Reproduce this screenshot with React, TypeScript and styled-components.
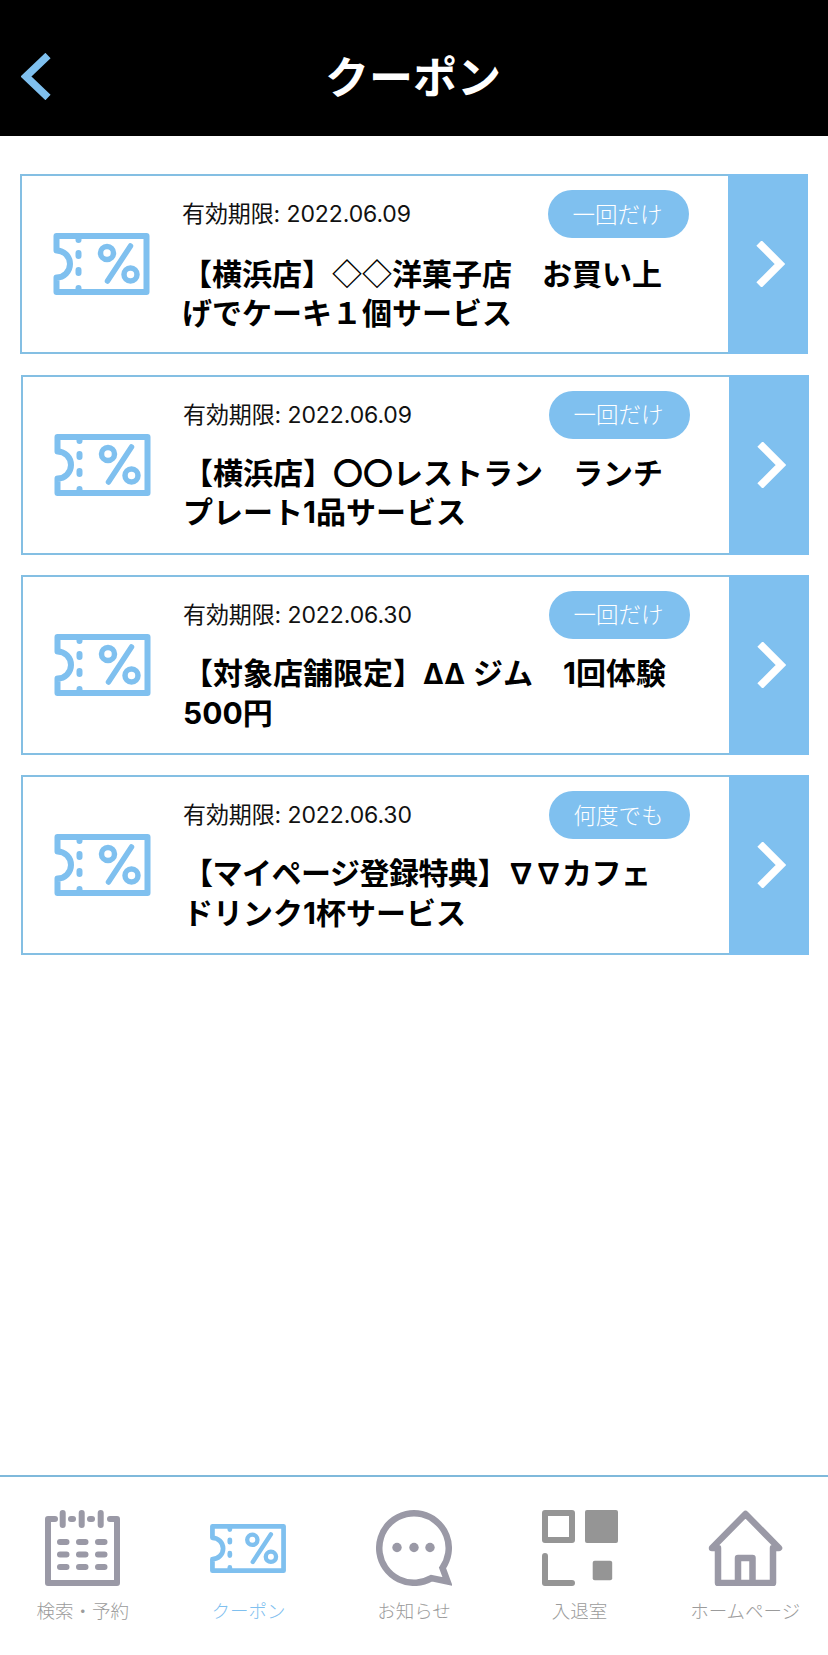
import * as React from 'react'
import styled, { createGlobalStyle } from 'styled-components'

const BLUE = '#7fc0ef'
const LINE = '#84bfe3'
const GREY = '#9a99a6'
const JP = '"Noto Sans CJK JP", sans-serif'

const GlobalStyle = createGlobalStyle`
html, body {
  margin: 0;
  padding: 0;
  background: #fff;
}
* {
  box-sizing: border-box;
}
`

const Page = styled.div`
width: 828px;
height: 1655px;
display: flex;
flex-direction: column;
font-family: ${JP};
background: #fff;
`

const Header = styled.header`
flex: none;
height: 136px;
background: #000;
display: grid;
grid-template-columns: 100px 1fr 100px;
align-items: center;
padding-top: 14px;
`

const BackButton = styled.div`
padding-left: 21px;
padding-top: 2px;
display: flex;
`

const Title = styled.h1`
margin: 0;
text-align: center;
color: #fff;
font-size: 44px;
line-height: 60px;
font-weight: 700;
transform: translateX(-1px);
`

const List = styled.main`
flex: auto;
display: flex;
flex-direction: column;
gap: 20.4px;
padding: 38.2px 19px 0 21px;
`

const Card = styled.section<{ $first?: boolean }>`
height: 180px;
display: flex;
border: 2px solid ${LINE};
background: #fff;
transform: translateX(${(p) => (p.$first ? '-1px' : '0')});
`

const TicketCell = styled.div`
flex: none;
width: 159px;
display: flex;
align-items: center;
padding-left: 31px;
`

const Body = styled.div`
flex: auto;
min-width: 0;
padding: 14px 39px 0 1px;
`

const MetaRow = styled.div`
height: 48px;
display: flex;
align-items: center;
justify-content: space-between;
`

const Expiry = styled.div`
font-family: Inter, ${JP};
font-size: 23px;
letter-spacing: -0.1px;
color: #111;
transform: translateY(-2px);
`

const Pill = styled.div`
width: 141px;
height: 48px;
border-radius: 24px;
background: ${BLUE};
color: #fff;
font-size: 22.5px;
font-weight: 300;
display: flex;
align-items: center;
justify-content: center;
padding: 0 2px 3px 0;
`

const CouponName = styled.div`
margin-top: 15px;
font-family: Inter, ${JP};
font-size: 30px;
line-height: 39px;
font-weight: 700;
color: #000;
`

const NameLine = styled.span<{ $tight?: boolean }>`
letter-spacing: ${(p) => (p.$tight ? '-0.5px' : '0')};
`

// white diamonds come from the CJK font, Inter's are too heavy
const Diamond = styled.span`
font-family: ${JP};
`

const Triangle = styled.span<{ $gap: number }>`
font-size: 28px;
margin-right: ${(p) => p.$gap}px;
`

const ArrowPanel = styled.div`
flex: none;
width: 80px;
margin: -2px -2px -2px 0;
background: ${BLUE};
display: flex;
align-items: center;
justify-content: center;
padding-left: 3px;
`

const TabBar = styled.nav`
flex: none;
height: 180px;
border-top: 2px solid #7fb9db;
display: grid;
grid-template-columns: repeat(5, 1fr);
padding-top: 33px;
`

const Tab = styled.div`
display: flex;
flex-direction: column;
align-items: center;
`

const TabIcon = styled.div`
height: 76px;
display: flex;
align-items: center;
`

const TabLabel = styled.div<{ $active?: boolean }>`
margin-top: 10px;
font-size: 18.5px;
line-height: 28px;
font-weight: 300;
white-space: nowrap;
color: ${(p) => (p.$active ? BLUE : '#9b9b9b')};
`

const Ticket = ({ width, height }: { width: number; height: number }) => (
  <svg width={width} height={height} viewBox="0 0 96 62" fill="none" stroke={BLUE} strokeWidth="6" strokeLinecap="round" strokeLinejoin="round">
    <path d="M25 3H93V59H25M25 59H3V44.5A13.5 13.5 0 0 0 3 17.5V3H25" />
    <path d="M25 3V7M25 20V23M25 37V40M25 55V59" />
    <circle cx="53.5" cy="20" r="6.5" strokeWidth="5.5" />
    <circle cx="77" cy="41.5" r="6.5" strokeWidth="5.5" />
    <path d="M77 13L54 48" strokeWidth="5.5" />
  </svg>
)

const Chevron = ({ color, width, height }: { color: string; width: number; height: number }) => (
  <svg width={width} height={height} viewBox="0 0 30 46" fill="none" stroke={color} strokeWidth="7.5">
    <path d="M4 2L25 23L4 44" />
  </svg>
)

const BackChevron = () => (
  <svg width="30" height="47" viewBox="0 0 30 47" fill="none" stroke={BLUE} strokeWidth="7.5">
    <path d="M27 2.5L5 23.5L27 44.5" />
  </svg>
)

const CalendarIcon = () => (
  <svg width="75" height="76" viewBox="0 0 75 76" fill="none" stroke={GREY} strokeWidth="6" strokeLinecap="round" strokeLinejoin="round">
    <path d="M10 9H3V73H72V9H65" />
    <path d="M17.7 3V15M36.7 3V15M55.7 3V15" />
    <path d="M26 9H28M45 9H47" />
    <path d="M15 32H21.5M34 32H40.5M53 32H59.5M15 44.5H21.5M34 44.5H40.5M53 44.5H59.5M15 57H21.5M34 57H40.5M53 57H59.5" />
  </svg>
)

const BubbleIcon = () => (
  <svg width="76" height="76" viewBox="0 0 76 76" fill="none" stroke={GREY} strokeWidth="6.5">
    <path d="M55.4 68.1A34.75 34.75 0 1 1 66.5 57.9L71.5 71.5Z" strokeLinejoin="miter" />
    <g fill={GREY} stroke="none">
      <circle cx="21" cy="37.5" r="4.7" />
      <circle cx="38" cy="37.5" r="4.7" />
      <circle cx="54" cy="37.5" r="4.7" />
    </g>
  </svg>
)

const QrIcon = () => (
  <svg width="76" height="76" viewBox="0 0 76 76" fill="none" stroke="#959595" strokeWidth="6" strokeLinecap="round" strokeLinejoin="round">
    <rect x="3" y="3" width="27" height="27" />
    <rect x="43" width="33" height="33" rx="2" fill="#959595" stroke="none" />
    <path d="M3 46V73H30" />
    <rect x="50.7" y="50.7" width="19.5" height="19.5" rx="2" fill="#959595" stroke="none" />
  </svg>
)

const HomeIcon = () => (
  <svg width="75" height="76" viewBox="0 0 75 76" fill="none" stroke={GREY} strokeWidth="6.5" strokeLinecap="round" strokeLinejoin="round">
    <path d="M10 38H4L37.5 4L71 38H65V73H10Z" />
    <path d="M30 73V48H44.5V73" />
  </svg>
)

const coupons = [
  {
    expiry: '2022.06.09',
    usage: '一回だけ',
    first: <>【横浜店】<Diamond>◇◇</Diamond>洋菓子店　お買い上</>,
    second: 'げでケーキ１個サービス',
  },
  {
    expiry: '2022.06.09',
    usage: '一回だけ',
    first: <>【横浜店】〇〇レストラン　ランチ</>,
    second: 'プレート1品サービス',
  },
  {
    expiry: '2022.06.30',
    usage: '一回だけ',
    first: <>【対象店舗限定】<Triangle $gap={8}>∆∆</Triangle>ジム　1回体験</>,
    second: '500円',
  },
  {
    expiry: '2022.06.30',
    usage: '何度でも',
    tight: true,
    first: <>【マイページ登録特典】<Triangle $gap={0}>∇∇</Triangle>カフェ</>,
    second: 'ドリンク1杯サービス',
  },
]

export default function App() {
  return (
    <Page>
      <GlobalStyle />
      <Header>
        <BackButton>
          <BackChevron />
        </BackButton>
        <Title>クーポン</Title>
      </Header>
      <List>
        {coupons.map((c, i) => (
          <Card key={i} $first={i === 0}>
            <TicketCell>
              <Ticket width={97} height={62} />
            </TicketCell>
            <Body>
              <MetaRow>
                <Expiry>有効期限: {c.expiry}</Expiry>
                <Pill>{c.usage}</Pill>
              </MetaRow>
              <CouponName>
                <NameLine $tight={c.tight}>{c.first}</NameLine>
                <br />
                {c.second}
              </CouponName>
            </Body>
            <ArrowPanel>
              <Chevron color="#fff" width={30} height={46} />
            </ArrowPanel>
          </Card>
        ))}
      </List>
      <TabBar>
        <Tab>
          <TabIcon><CalendarIcon /></TabIcon>
          <TabLabel>検索・予約</TabLabel>
        </Tab>
        <Tab>
          <TabIcon><Ticket width={76} height={49} /></TabIcon>
          <TabLabel $active>クーポン</TabLabel>
        </Tab>
        <Tab>
          <TabIcon><BubbleIcon /></TabIcon>
          <TabLabel>お知らせ</TabLabel>
        </Tab>
        <Tab>
          <TabIcon><QrIcon /></TabIcon>
          <TabLabel>入退室</TabLabel>
        </Tab>
        <Tab>
          <TabIcon><HomeIcon /></TabIcon>
          <TabLabel>ホームページ</TabLabel>
        </Tab>
      </TabBar>
    </Page>
  )
}
